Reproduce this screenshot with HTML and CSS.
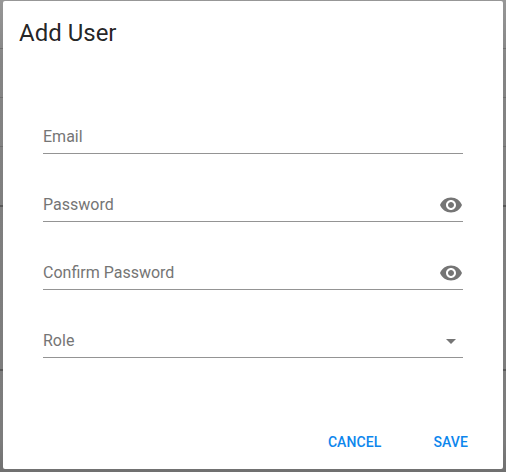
FILE: index.html
```html
<!DOCTYPE html>
<html lang="en">
<head>
<meta charset="utf-8">
<title>Add User</title>
<link rel="stylesheet" href="styles.css">
</head>
<body>
<div class="backdrop">
<i class="rule r1"></i><i class="rule r2"></i><i class="rule r3"></i><i class="rule dark r4"></i><i class="rule dark r5"></i>
</div>
<form class="dialog">
<h1 class="title">Add User</h1>
<div class="fields">
<div class="field"><span>Email</span></div>
<div class="field"><span>Password</span><svg class="icon" viewBox="0 0 24 24"><path d="M12 4.5C7 4.5 2.73 7.61 1 12c1.73 4.39 6 7.5 11 7.5s9.27-3.11 11-7.5c-1.73-4.39-6-7.5-11-7.5zM12 17c-2.76 0-5-2.24-5-5s2.24-5 5-5 5 2.24 5 5-2.24 5-5 5zm0-8c-1.66 0-3 1.34-3 3s1.34 3 3 3 3-1.34 3-3-1.34-3-3-3z"/></svg></div>
<div class="field"><span>Confirm Password</span><svg class="icon" viewBox="0 0 24 24"><path d="M12 4.5C7 4.5 2.73 7.61 1 12c1.73 4.39 6 7.5 11 7.5s9.27-3.11 11-7.5c-1.73-4.39-6-7.5-11-7.5zM12 17c-2.76 0-5-2.24-5-5s2.24-5 5-5 5 2.24 5 5-2.24 5-5 5zm0-8c-1.66 0-3 1.34-3 3s1.34 3 3 3 3-1.34 3-3-1.34-3-3-3z"/></svg></div>
<div class="field"><span>Role</span><svg class="icon" viewBox="0 0 24 24"><path d="M7 10l5 5 5-5z"/></svg></div>
</div>
<div class="actions"><button type="button">Cancel</button><button type="button">Save</button></div>
</form>
</body>
</html>
```
FILE: styles.css
```css
* { box-sizing: border-box; }
body { margin: 0; height: 472px; overflow: hidden; padding: 1px 3px 3px; font-family: Roboto, sans-serif; background: #808080; }
.backdrop { position: absolute; inset: 0; overflow: hidden; background: linear-gradient(#979797, #858585 60px, #7f7f7f 200px, #7c7c7c 440px, #707070); }
.rule { position: absolute; left: 0; right: 0; height: 1px; background: #6f6f6f; }
.rule.dark { background: #585858; height: 2px; }
.r1 { top: 48px; } .r2 { top: 97px; } .r3 { top: 146px; } .r4 { top: 205px; } .r5 { top: 369px; }
.dialog { position: relative; height: 468px; background: #fff; border-radius: 2px; display: flex; flex-direction: column; }
.title { margin: 0; padding: 16px 16px 0; font-size: 24px; line-height: 32px; font-weight: 400; color: rgba(0,0,0,.87); }
.fields { padding: 72px 40px 0; display: flex; flex-direction: column; gap: 35px; }
.field { height: 33px; padding-bottom: 1px; display: flex; align-items: center; justify-content: space-between; border-bottom: 1px solid #949494; font-size: 16px; color: #757575; }
.icon { width: 24px; height: 24px; fill: #757575; }
.actions { margin-top: auto; padding: 0 27px 9px; display: flex; justify-content: flex-end; gap: 36px; }
.actions button { border: 0; background: none; height: 36px; padding: 0 8px; font: 500 14px Roboto, sans-serif; letter-spacing: .1px; text-transform: uppercase; color: #0d86ed; }
```
